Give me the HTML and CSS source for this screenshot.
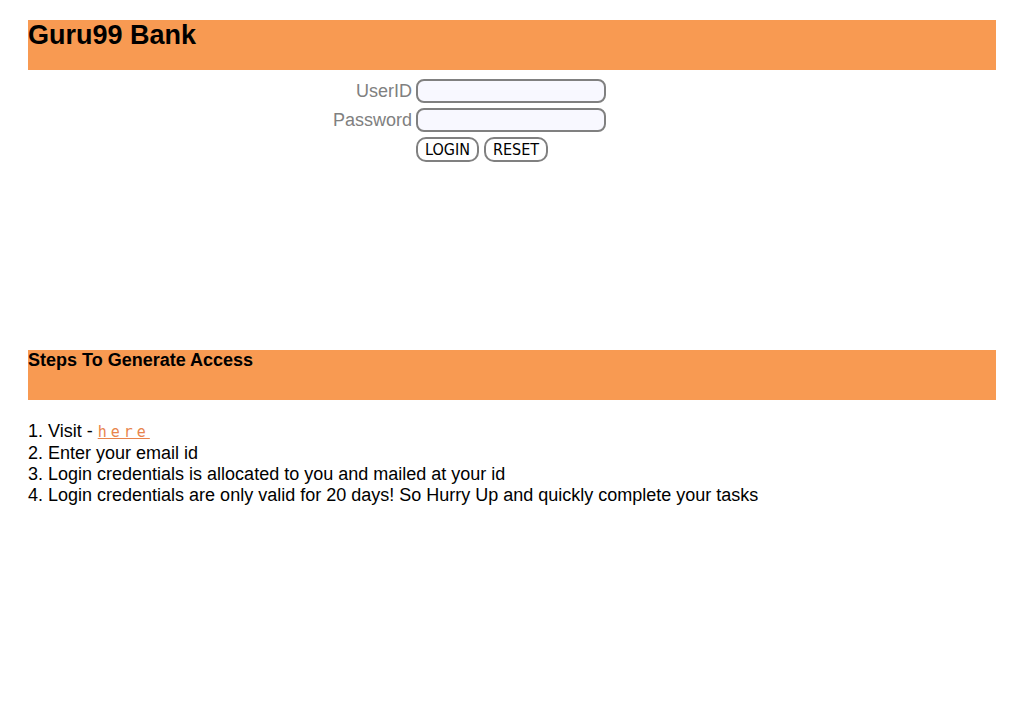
FILE: index.html
```html
<!DOCTYPE html>
<html>
<head>
<meta charset="utf-8">
<title>Guru99 Bank</title>
<link rel="stylesheet" href="styles.css">
</head>
<body>
<div class="page">
  <div class="bar top-bar"><h2 class="title">Guru99 Bank</h2></div>
  <form class="login">
    <label class="lbl" for="uid">UserID</label>
    <input class="field" id="uid" type="text">
    <label class="lbl" for="pwd">Password</label>
    <input class="field" id="pwd" type="password">
    <span></span>
    <div class="buttons">
      <button class="btn" type="button">LOGIN</button>
      <button class="btn" type="button">RESET</button>
    </div>
  </form>
  <div class="bar steps-bar"><h3 class="steps-title">Steps To Generate Access</h3></div>
  <ol class="steps">
    <li>1. Visit - <a class="here" href="#">here</a></li>
    <li>2. Enter your email id</li>
    <li>3. Login credentials is allocated to you and mailed at your id</li>
    <li>4. Login credentials are only valid for 20 days! So Hurry Up and quickly complete your tasks</li>
  </ol>
</div>
</body>
</html>
```
FILE: styles.css
```css
html, body {
  margin: 0;
  padding: 0;
  background: #fff;
}
body {
  font-family: "Liberation Sans", Arial, sans-serif;
  color: #000;
}
.page {
  padding: 20px 28px 0 28px;
}
.bar {
  background: #f89a52;
  height: 50px;
}
.title {
  margin: 0;
  font-size: 27px;
  font-weight: bold;
  line-height: 30px;
}
.login {
  display: grid;
  grid-template-columns: 384px 190px;
  column-gap: 4px;
  row-gap: 5px;
  margin-top: 9px;
  align-items: center;
}
.lbl {
  text-align: right;
  font-size: 18px;
  color: #808080;
  line-height: 24px;
}
.field {
  box-sizing: border-box;
  width: 190px;
  height: 24px;
  margin: 0;
  border: 2px solid #808080;
  border-radius: 8px;
  background: #f8f8ff;
  padding: 0 4px;
}
.buttons {
  display: flex;
  gap: 5px;
}
.btn {
  box-sizing: border-box;
  height: 25px;
  margin: 0;
  padding: 0 7px;
  border: 2px solid #808080;
  border-radius: 10px;
  background: #fff;
  font-family: "DejaVu Sans Condensed", "DejaVu Sans", sans-serif;
  font-stretch: condensed;
  font-size: 16px;
  color: #000;
  line-height: 20px;
}
.steps-bar {
  margin-top: 188px;
}
.steps-title {
  margin: 0;
  font-size: 18px;
  font-weight: bold;
  line-height: 21px;
}
.steps {
  list-style: none;
  margin: 21px 0 0 0;
  padding: 0;
  font-size: 18px;
  line-height: 21px;
}
.here {
  font-family: "DejaVu Sans Mono", monospace;
  font-size: 15px;
  letter-spacing: 4px;
  color: #e8844c;
  text-decoration: underline;
}
```
